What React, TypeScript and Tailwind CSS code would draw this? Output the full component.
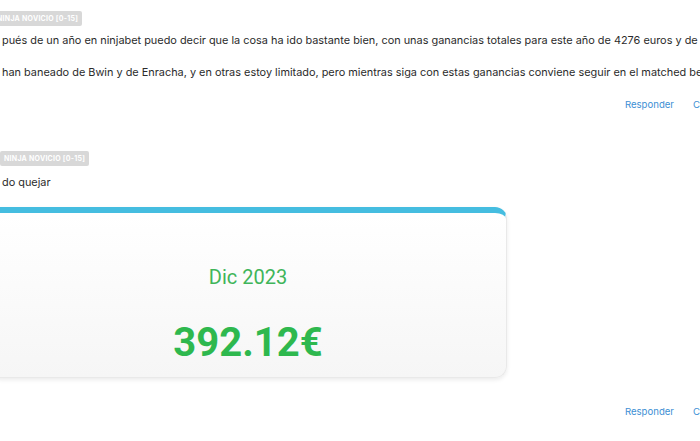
import React from 'react';

const Badge: React.FC<{ className?: string }> = ({ className = '' }) => (
    <div
        className={`flex h-[15px] w-fit items-center rounded-[2px] bg-[#d8d8d8] px-[4px] text-[7px] font-bold uppercase leading-none tracking-[0.25px] text-white ${className}`}
    >
        NINJA NOVICIO [0-15]
    </div>
);

const Actions: React.FC = () => (
    <div className="flex h-[20px] items-center justify-end gap-[19px] text-[9.6px] text-[#3d8fd4]">
        <span>Responder</span>
        <span className="w-[7px] overflow-hidden">C</span>
    </div>
);

export default function App() {
    return (
        <div
            className="h-[441px] w-[700px] overflow-hidden bg-white text-[#2b2b2b]"
            style={{ fontFamily: 'Inter, "Noto Sans", sans-serif' }}
        >
            <div className="w-[700px] pt-[11px]">
                <Badge className="-ml-[7px]" />
                <div className="mt-[4px] h-[20px] overflow-hidden whitespace-nowrap pl-[2px] text-[10.9px] leading-[20px]">
                    pués de un año en ninjabet puedo decir que la cosa ha ido bastante bien, con unas ganancias totales para este año de 4276 euros y de
                </div>
                <div className="mt-[12px] h-[20px] overflow-hidden whitespace-nowrap pl-[2px] text-[10.9px] leading-[20px]">
                    han baneado de Bwin y de Enracha, y en otras estoy limitado, pero mientras siga con estas ganancias conviene seguir en el matched be
                </div>
                <div className="mt-[13px]">
                    <Actions />
                </div>

                <Badge className="mt-[36px]" />
                <div className="mt-[6px] h-[20px] whitespace-nowrap pl-[2px] text-[10.9px] leading-[20px]">do quejar</div>

                <div
                    className="-ml-[11px] mt-[15px] flex h-[171px] w-[518px] flex-col items-center rounded-[12px] border border-t-[6px] border-[#e9e9e9] border-t-[#45bde0] bg-gradient-to-b from-white to-[#f6f6f6] shadow-[0_2px_4px_rgba(0,0,0,0.08)]"
                    style={{ fontFamily: 'Roboto, "Liberation Sans", sans-serif' }}
                >
                    <div className="mt-[52px] text-[20px] leading-[24px] text-[#3fb55a]">Dic 2023</div>
                    <div className="mt-[31px] text-[40px] font-bold leading-[46px] text-[#2eb84e]">392.12€</div>
                </div>

                <div className="mt-[24px]">
                    <Actions />
                </div>
            </div>
        </div>
    );
}
